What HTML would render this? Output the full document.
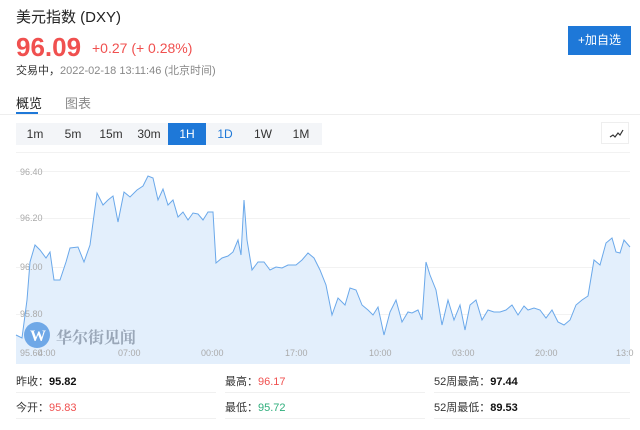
<!DOCTYPE html>
<html><head><meta charset="utf-8"><style>
body{margin:0;width:640px;height:430px;background:#fff;font-family:"Liberation Sans","Noto Sans CJK SC",sans-serif;position:relative;overflow:hidden;color:#333}
.a{position:absolute;white-space:nowrap}
.tb span{display:inline-block;width:38px;text-align:center;font-size:12px;line-height:22px;color:#333}
</style></head><body>
<div class="a" style="left:16px;top:6px;font-size:15px;color:#222">美元指数 (DXY)</div>
<div class="a" style="left:16px;top:32px;font-size:26px;font-weight:bold;color:#f0504f">96.09</div>
<div class="a" style="left:92px;top:40px;font-size:14px;color:#f0504f">+0.27 (+ 0.28%)</div>
<div class="a" style="left:16px;top:62px;font-size:11px;color:#888"><span style="color:#333">交易中，</span>2022-02-18 13:11:46 (北京时间)</div>
<div class="a" style="left:568px;top:26px;width:63px;height:29px;background:#1e78d8;color:#fff;font-size:12px;line-height:29px;text-align:center">+加自选</div>
<div class="a" style="left:16px;top:93px;font-size:13px;color:#222">概览</div>
<div class="a" style="left:65px;top:93px;font-size:13px;color:#888">图表</div>
<div class="a" style="left:16px;top:112px;width:22px;height:2px;background:#1e78d8"></div>
<div class="a" style="left:0;top:114px;width:640px;height:1px;background:#eee"></div>
<div class="a tb" style="left:16px;top:123px;height:22px;background:#f3f5f8;width:306px"><span>1m</span><span>5m</span><span>15m</span><span>30m</span><span style="background:#1e78d8;color:#fff">1H</span><span style="color:#1e78d8">1D</span><span>1W</span><span>1M</span></div>
<div class="a" style="left:601px;top:122px;width:28px;height:22px;border:1px solid #eee;box-sizing:border-box"><svg width="28" height="22"><polyline points="8,14 11,12 13,14 16,10 18,12 21,7" fill="none" stroke="#333" stroke-width="1.2"/></svg></div>
<svg class="a" style="left:0;top:150px" width="640" height="215">
<rect x="16" y="2" width="614" height="212" fill="#fff"/>
<g stroke="#f2f2f2" stroke-width="1"><line x1="16" y1="2.5" x2="630" y2="2.5"/><line x1="16" y1="21.5" x2="630" y2="21.5"/><line x1="16" y1="68.5" x2="630" y2="68.5"/><line x1="16" y1="117.5" x2="630" y2="117.5"/><line x1="16" y1="164.5" x2="630" y2="164.5"/></g>
<polygon fill="#e3effc" points="16,185 22,188 27,150 30,112 35,95 40,100 46,108 50,102 54,130 60,130 66,112 70,98 78,97 84,112 90,95 97,43 103,55 108,50 113,46 118,72 124,42 130,47 137,40 143,36 148,26 153,28 158,50 163,39 168,55 173,50 178,67 183,62 188,70 193,63 198,64 203,70 208,62 213,62 216,113 222,108 228,106 233,102 238,90 241,105 244,50 247,90 252,120 258,112 264,112 270,120 276,117 282,118 288,115 296,115 302,110 308,103 314,108 320,120 326,135 332,165 338,148 345,155 350,138 356,140 362,155 368,160 373,165 378,157 384,185 390,162 396,150 402,172 408,162 412,163 418,160 422,170 426,112 430,125 436,140 442,175 448,150 454,170 460,155 465,180 470,155 476,150 482,170 488,160 494,162 500,162 506,160 512,155 518,165 524,156 528,160 534,158 540,160 546,168 552,160 558,172 564,175 570,170 576,155 582,150 588,146 594,110 600,115 606,93 612,88 616,102 620,103 624,90 630,97 630,214 16,214"/>
<g fill="#aaa" font-size="9" font-family="Liberation Sans">
<text x="20" y="25">96.40</text><text x="20" y="71">96.20</text><text x="20" y="120">96.00</text><text x="20" y="167">95.80</text><text x="20" y="206">95.60</text>
<text x="38" y="206">4:00</text><text x="118" y="206">07:00</text><text x="201" y="206">00:00</text><text x="285" y="206">17:00</text><text x="369" y="206">10:00</text><text x="452" y="206">03:00</text><text x="535" y="206">20:00</text><text x="616" y="206">13:0</text>
</g>
<polyline fill="none" stroke="#6aa8ea" stroke-width="1" points="16,185 22,188 27,150 30,112 35,95 40,100 46,108 50,102 54,130 60,130 66,112 70,98 78,97 84,112 90,95 97,43 103,55 108,50 113,46 118,72 124,42 130,47 137,40 143,36 148,26 153,28 158,50 163,39 168,55 173,50 178,67 183,62 188,70 193,63 198,64 203,70 208,62 213,62 216,113 222,108 228,106 233,102 238,90 241,105 244,50 247,90 252,120 258,112 264,112 270,120 276,117 282,118 288,115 296,115 302,110 308,103 314,108 320,120 326,135 332,165 338,148 345,155 350,138 356,140 362,155 368,160 373,165 378,157 384,185 390,162 396,150 402,172 408,162 412,163 418,160 422,170 426,112 430,125 436,140 442,175 448,150 454,170 460,155 465,180 470,155 476,150 482,170 488,160 494,162 500,162 506,160 512,155 518,165 524,156 528,160 534,158 540,160 546,168 552,160 558,172 564,175 570,170 576,155 582,150 588,146 594,110 600,115 606,93 612,88 616,102 620,103 624,90 630,97"/>
<circle cx="37" cy="185" r="13" fill="#5b9be3" opacity="0.85"/>
<text x="30" y="191" fill="#fff" font-size="16" font-weight="bold" font-family="Liberation Serif">W</text>
<text x="56" y="193" fill="#9aa7b8" font-size="16" font-weight="bold" font-family="Noto Serif CJK SC,serif">华尔街见闻</text>
</svg>
<div class="a" style="left:16px;top:373px;font-size:11px;color:#333">昨收：<b style="color:#111">95.82</b></div>
<div class="a" style="left:225px;top:373px;font-size:11px;color:#333">最高：<span style="color:#f0504f">96.17</span></div>
<div class="a" style="left:434px;top:373px;font-size:11px;color:#333">52周最高：<b style="color:#111">97.44</b></div>
<div class="a" style="left:16px;top:399px;font-size:11px;color:#333">今开：<span style="color:#f0504f">95.83</span></div>
<div class="a" style="left:225px;top:399px;font-size:11px;color:#333">最低：<span style="color:#2fae7c">95.72</span></div>
<div class="a" style="left:434px;top:399px;font-size:11px;color:#333">52周最低：<b style="color:#111">89.53</b></div>
<div class="a" style="left:16px;top:392px;width:200px;height:1px;background:#f0f0f0"></div>
<div class="a" style="left:225px;top:392px;width:200px;height:1px;background:#f0f0f0"></div>
<div class="a" style="left:434px;top:392px;width:196px;height:1px;background:#f0f0f0"></div>
<div class="a" style="left:16px;top:418px;width:200px;height:1px;background:#f0f0f0"></div>
<div class="a" style="left:225px;top:418px;width:200px;height:1px;background:#f0f0f0"></div>
<div class="a" style="left:434px;top:418px;width:196px;height:1px;background:#f0f0f0"></div>
</body></html>
